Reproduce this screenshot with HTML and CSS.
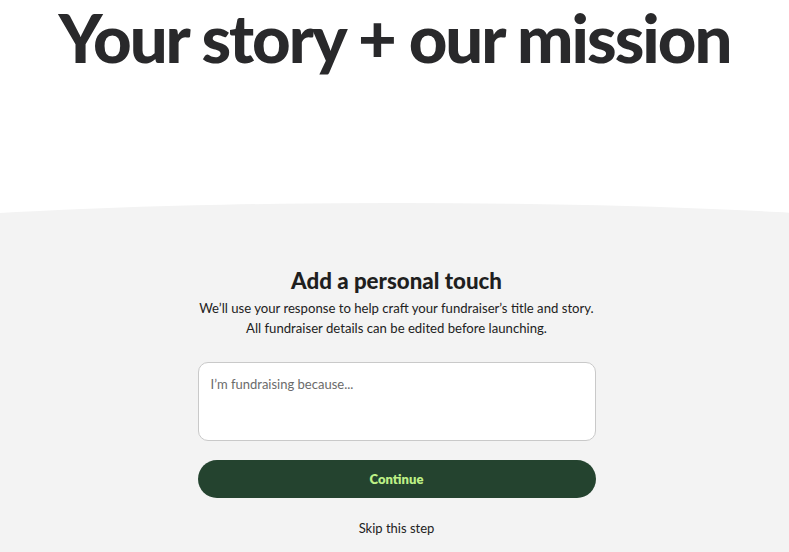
FILE: index.html
```html
<!DOCTYPE html>
<html lang="en">

<head>
  <meta charset="UTF-8">
  <meta name="viewport" content="width=device-width, initial-scale=1.0">
  <title>Your story + our mission</title>
  <link rel="stylesheet" href="styles.css">
</head>

<body>
  <header class="hero">
    <h1>Your story + our mission</h1>
  </header>

  <div class="panel-wrap">
    <section class="panel">
      <div class="form">
        <h2>Add a personal touch</h2>
        <p class="lead">We’ll use your response to help craft your fundraiser’s title and story.<br>All fundraiser details can be edited before launching.</p>

        <textarea class="story-input" placeholder="I’m fundraising because..."></textarea>

        <button class="continue-btn">Continue</button>
        <a href="#" class="skip-link">Skip this step</a>
      </div>
    </section>
  </div>
</body>

</html>
```

FILE: styles.css
```css
body {
  font-family: Lato, 'Noto Sans', sans-serif;
  margin: 0;
  background-color: #fff;
  color: #232323;
  overflow: hidden;
}

.hero {
  height: 203px;
  padding-top: 1px;
  box-sizing: border-box;
  text-align: center;
}

h1 {
  margin: 0;
  font-size: 67px;
  line-height: 72px;
  font-weight: 900;
  letter-spacing: -2px;
  color: #29292b;
}

.panel-wrap {
  overflow: hidden;
}

.panel {
  width: 1200px;
  margin-left: calc(50% - 598px);
  min-height: 360px;
  background-color: #f3f3f3;
  border-radius: 600px 600px 0 0 / 40px 40px 0 0;
  padding-top: 64px;
  box-sizing: border-box;
}

.form {
  width: 398px;
  margin: 0 auto;
  display: flex;
  flex-direction: column;
  align-items: center;
}

h2 {
  margin: 0;
  font-size: 22.3px;
  line-height: 28px;
  font-weight: 900;
  color: #1f1f1f;
}

.lead {
  margin: 3px 0 0;
  font-size: 13.15px;
  line-height: 20px;
  text-align: center;
  white-space: nowrap;
  color: #222;
}

.story-input {
  width: 100%;
  height: 79px;
  margin-top: 24px;
  padding: 11px 12px;
  box-sizing: border-box;
  border: 1px solid #c9c9c9;
  border-radius: 10px;
  background-color: #fff;
  font-family: inherit;
  font-size: 13px;
  line-height: 20px;
  color: #222;
  resize: none;
}

.story-input::placeholder {
  color: #6b6b6b;
}

.continue-btn {
  width: 100%;
  height: 38px;
  margin-top: 19px;
  border: none;
  border-radius: 19px;
  background-color: #24432f;
  color: #bdf086;
  font-family: inherit;
  font-size: 13px;
  font-weight: 800;
  cursor: pointer;
}

.skip-link {
  margin-top: 20px;
  font-size: 13px;
  line-height: 20px;
  color: #222;
  text-decoration: none;
}
```
